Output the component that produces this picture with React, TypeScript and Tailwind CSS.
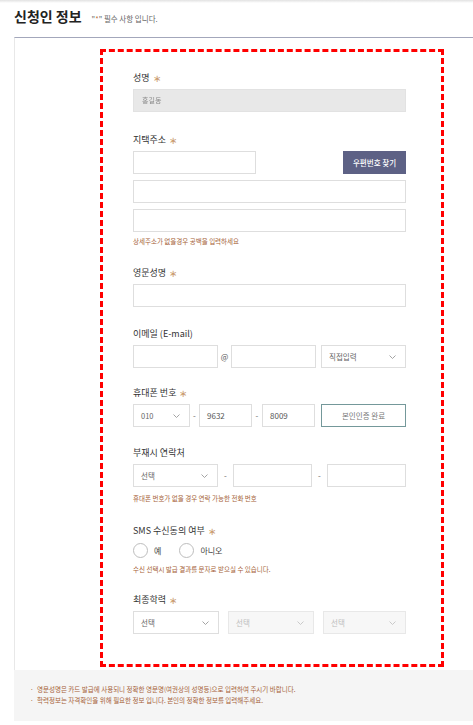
import React from "react";

const Chevron = ({ color = "#9a9a9a" }: { color?: string }) => (
  <svg width="7" height="4" viewBox="0 0 7 4" className="shrink-0">
    <polyline points="0.5,0.5 3.5,3.5 6.5,0.5" fill="none" stroke={color} strokeWidth="0.9" />
  </svg>
);

const Star = () => <span className="ml-[3px] text-[#c99a6e] text-[10px] leading-[14px]">∗</span>;

const Label = ({ children, req = true, mt }: { children: React.ReactNode; req?: boolean; mt: string }) => (
  <div className={`${mt} flex items-center h-[14px] text-[9px] leading-[14px] text-[#333]`}>
    <span>{children}</span>
    {req && <Star />}
  </div>
);

const Input = ({ w, children, cls = "" }: { w: string; children?: React.ReactNode; cls?: string }) => (
  <div className={`${w} h-[23px] border border-[#dedede] bg-white flex items-center pl-[7px] text-[8px] text-[#555] ${cls}`}>
    {children}
  </div>
);

const Select = ({ w, text, disabled = false }: { w: string; text: string; disabled?: boolean }) => (
  <div
    className={`${w} h-[23px] border flex items-center justify-between pl-[7px] pr-[9px] text-[7.5px] ${
      disabled ? "bg-[#f7f7f7] border-[#e8e8e8] text-[#bdbdbd]" : "bg-white border-[#dedede] text-[#666]"
    }`}
  >
    <span>{text}</span>
    <Chevron color={disabled ? "#c4c4c4" : "#9a9a9a"} />
  </div>
);

const Help = ({ children, mt }: { children: React.ReactNode; mt: string }) => (
  <div className={`${mt} text-[6.5px] leading-[10px] text-[#a65f38]`}>{children}</div>
);

const Dash = ({ w }: { w: string }) => (
  <div className={`${w} flex justify-center text-[8px] text-[#666]`}>-</div>
);

export default function App() {
  return (
    <div
      className="w-[473px] h-[725px] bg-white overflow-hidden"
      style={{ fontFamily: '"Noto Sans CJK KR", "Noto Sans", sans-serif' }}
    >
      <div className="h-[3px] bg-gradient-to-b from-[#e2e2e2] to-white" />
      <div className="h-[34px] pl-[14px] pt-[4px] flex items-baseline">
        <span className="text-[14px] leading-[18px] font-semibold text-[#222]">신청인 정보</span>
        <span className="ml-[10px] text-[7.5px] text-[#666]">
          "<span className="text-[#c0703a]">*</span>" 필수 사항 입니다.
        </span>
      </div>

      <div className="ml-[14px] h-[633px] border-t border-t-[#a3a7bb] border-l border-l-[#e8e8e8] pt-[11px] pl-[85px]">
        <div className="w-[344px] h-[618px] border-[3px] border-dashed border-[#ff0000] pl-[30px] pt-[19px]">
          <div className="w-[273px]">
            <Label mt="mt-0">성명</Label>
            <div className="mt-[4px] h-[23px] bg-[#e8e8e8] border border-[#e2e2e2] flex items-center pl-[8px]">
              <span className="text-[7px] text-[#8a8a8a] blur-[0.7px]">홍길동</span>
            </div>

            <Label mt="mt-[21px]">지택주소</Label>
            <div className="mt-[4px] flex justify-between">
              <Input w="w-[123px]" />
              <div className="w-[63px] h-[23px] bg-[#5d6185] flex items-center justify-center text-[7.5px] font-medium text-white">
                우편번호 찾기
              </div>
            </div>
            <Input w="w-full" cls="mt-[6px]" />
            <Input w="w-full" cls="mt-[6px]" />
            <Help mt="mt-[4px]">상세주소가 없을경우 공백을 입력하세요</Help>

            <Label mt="mt-[20px]">영문성명</Label>
            <Input w="w-full" cls="mt-[4px]" />

            <Label mt="mt-[20px]" req={false}>이메일 (E-mail)</Label>
            <div className="mt-[4px] flex items-center">
              <Input w="w-[85px]" />
              <div className="w-[13px] flex justify-center text-[8px] text-[#555]">@</div>
              <Input w="w-[85px]" />
              <div className="w-[5px]" />
              <Select w="w-[85px]" text="직접입력" />
            </div>

            <Label mt="mt-[18px]">휴대폰 번호</Label>
            <div className="mt-[4px] flex items-center">
              <Select w="w-[57px]" text="010" />
              <Dash w="w-[9px]" />
              <Input w="w-[53px]">9632</Input>
              <Dash w="w-[10px]" />
              <Input w="w-[53px]">8009</Input>
              <div className="w-[6px]" />
              <div className="w-[85px] h-[23px] border-[1.5px] border-[#74989a] flex items-center justify-center text-[7.5px] text-[#777]">
                본인인증 완료
              </div>
            </div>

            <Label mt="mt-[19px]" req={false}>부재시 연락처</Label>
            <div className="mt-[4px] flex items-center">
              <Select w="w-[85px]" text="선택" />
              <Dash w="w-[15px]" />
              <Input w="w-[79px]" />
              <Dash w="w-[15px]" />
              <Input w="w-[79px]" />
            </div>
            <Help mt="mt-[6px]">휴대폰 번호가 없을 경우 연락 가능한 전화 번호</Help>

            <Label mt="mt-[21px]">SMS 수신동의 여부</Label>
            <div className="mt-[5px] flex items-center h-[15px] text-[8px] text-[#444]">
              <div className="w-[15px] h-[15px] rounded-full border border-[#bdbdbd] bg-white" />
              <span className="ml-[6px]">예</span>
              <div className="ml-[18px] w-[15px] h-[15px] rounded-full border border-[#bdbdbd] bg-white" />
              <span className="ml-[6px]">아니오</span>
            </div>
            <Help mt="mt-[6px]">수신 선택시 발급 결과를 문자로 받으실 수 있습니다.</Help>

            <Label mt="mt-[19px]">최종학력</Label>
            <div className="mt-[4px] flex items-center">
              <Select w="w-[86px]" text="선택" />
              <div className="w-[9px]" />
              <Select w="w-[86px]" text="선택" disabled />
              <div className="w-[9px]" />
              <Select w="w-[83px]" text="선택" disabled />
            </div>
          </div>
        </div>
      </div>

      <div className="ml-[14px] h-[51px] bg-[#f5f5f5] pl-[16px] pt-[14px] text-[6.5px] leading-[11px] text-[#a65f38]">
        <div className="flex">
          <span className="w-[7px]">·</span>
          <span>영문성명은 카드 발급에 사용되니 정확한 영문명(여권상의 성명등)으로 입력하여 주시기 바랍니다.</span>
        </div>
        <div className="flex">
          <span className="w-[7px]">·</span>
          <span>학력정보는 자격확인을 위해 필요한 정보 입니다. 본인의 정확한 정보를 입력해주세요.</span>
        </div>
      </div>
    </div>
  );
}
